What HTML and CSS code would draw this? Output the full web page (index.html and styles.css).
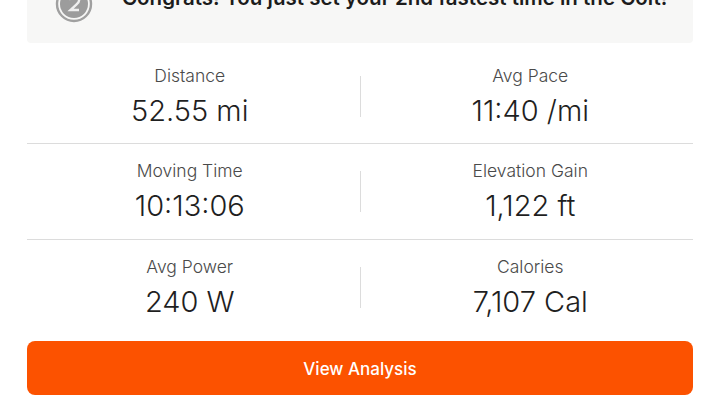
FILE: index.html
```html
<!DOCTYPE html>
<html lang="en">
<head>
<meta charset="utf-8">
<title>Activity stats</title>
<link rel="stylesheet" href="styles.css">
</head>
<body>
<main class="page">
  <section class="notice">
    <svg class="medal" width="38" height="38" viewBox="0 0 38 38" aria-hidden="true">
      <circle cx="19" cy="19" r="17" fill="none" stroke="#a0a0a0" stroke-width="2.400"/>
      <circle cx="19" cy="19" r="14" fill="#9c9c9c"/>
      <path d="M14 15c.6-3 2.600-4.500 5.200-4.500 3 0 5 1.900 5 4.400 0 2.100-1.200 3.300-2.900 4.800L15.500 25H24" fill="none" stroke="#efefef" stroke-width="2.400"/>
    </svg>
    <p class="notice-text">Congrats! You just set your 2nd fastest time in the Colt!</p>
  </section>
  <section class="stats">
    <div class="row">
      <div class="stat"><div class="label">Distance</div><div class="value">52.55 mi</div></div>
      <div class="divider"></div>
      <div class="stat"><div class="label">Avg Pace</div><div class="value">11:40 /mi</div></div>
    </div>
    <div class="row">
      <div class="stat"><div class="label">Moving Time</div><div class="value">10:13:06</div></div>
      <div class="divider"></div>
      <div class="stat"><div class="label">Elevation Gain</div><div class="value">1,122 ft</div></div>
    </div>
    <div class="row">
      <div class="stat"><div class="label">Avg Power</div><div class="value">240 W</div></div>
      <div class="divider"></div>
      <div class="stat"><div class="label">Calories</div><div class="value">7,107 Cal</div></div>
    </div>
  </section>
  <button class="action">View Analysis</button>
</main>
</body>
</html>
```
FILE: styles.css
```css
* { box-sizing: border-box; }
html, body { margin: 0; padding: 0; }
body {
  width: 720px;
  height: 405px;
  overflow: hidden;
  background: #fff;
  font-family: Inter, "Liberation Sans", sans-serif;
  color: #2b2b2b;
}
.page {
  height: 405px;
  padding: 0 27px;
  display: flex;
  flex-direction: column;
}
.notice {
  height: 43px;
  background: #f7f7f6;
  border-radius: 0 0 4px 4px;
  display: flex;
  align-items: flex-start;
  padding-left: 28px;
  gap: 29px;
}
.medal { margin-top: -15px; flex: none; }
.notice-text {
  margin: -13px 0 0;
  font-size: 20.5px;
  line-height: 22px;
  font-weight: 600;
  color: #1c1c1c;
  white-space: nowrap;
}
.stats {
  display: flex;
  flex-direction: column;
  padding-top: 6px;
}
.row {
  height: 95px;
  display: flex;
  align-items: center;
  border-bottom: 1px solid #dcdcdc;
}
.row:nth-child(2) { height: 96px; }
.row:last-child { border-bottom: 0; height: 94px; }
.stat {
  flex: 1;
  padding-top: 2px;
  padding-right: 7px;
  text-align: center;
}
.divider + .stat {
  padding-right: 0;
  padding-left: 7px;
}
.label {
  font-size: 17.5px;
  line-height: 22px;
  font-weight: 300;
  color: #4a4a4a;
}
.value {
  margin-top: 5px;
  font-size: 29px;
  line-height: 38px;
  font-weight: 300;
  color: #1f1f1f;
}
.divider {
  width: 1px;
  height: 41px;
  background: #dcdcdc;
  flex: none;
}
.action {
  height: 54px;
  margin-top: 7px;
  padding-top: 2px;
  border: 0;
  border-radius: 8px;
  background: #fc5200;
  color: #fff;
  font-family: inherit;
  font-size: 17px;
  font-weight: 500;
}
```
